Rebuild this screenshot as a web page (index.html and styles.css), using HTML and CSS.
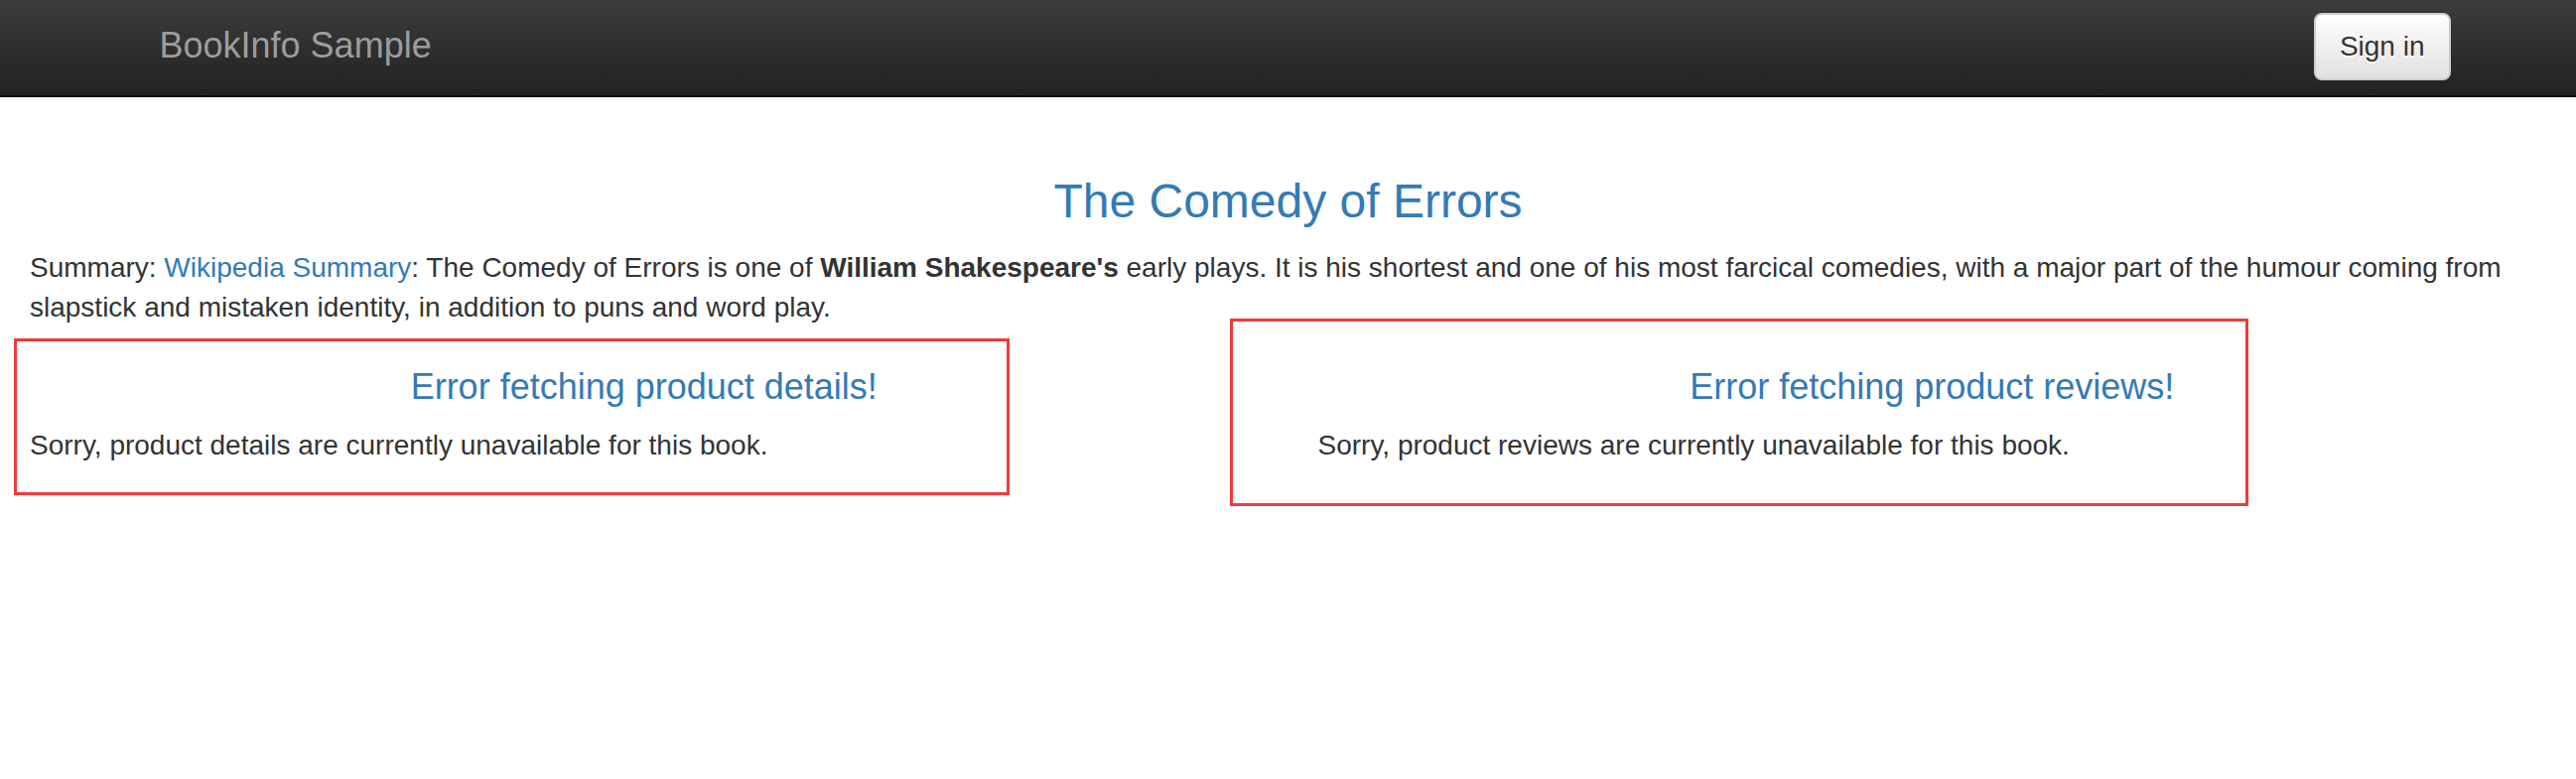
FILE: index.html
```html
<!DOCTYPE html>
<html lang="en">
<head>
<meta charset="utf-8">
<title>Simple Bookstore App</title>
<link rel="stylesheet" href="styles.css">
</head>
<body>
<nav class="navbar">
  <div class="nav-container">
    <a class="brand" href="#">BookInfo Sample</a>
    <button type="button" class="btn-signin">Sign in</button>
  </div>
</nav>
<main class="content">
  <h3 class="title">The Comedy of Errors</h3>
  <p class="summary">Summary: <a class="link" href="#">Wikipedia Summary</a>: The Comedy of Errors is one of <b>William Shakespeare's</b> early plays. It is his shortest and one of his most farcical comedies, with a major part of the humour coming from slapstick and mistaken identity, in addition to puns and word play.</p>
  <div class="row">
    <div class="col">
      <h4 class="subtitle">Error fetching product details!</h4>
      <p class="msg">Sorry, product details are currently unavailable for this book.</p>
    </div>
    <div class="col">
      <h4 class="subtitle">Error fetching product reviews!</h4>
      <p class="msg">Sorry, product reviews are currently unavailable for this book.</p>
    </div>
  </div>
</main>
<div class="mark mark-details"></div>
<div class="mark mark-reviews"></div>
</body>
</html>
```

FILE: styles.css
```css
* { box-sizing: border-box; }
html, body {
  margin: 0;
  padding: 0;
  background: #fff;
}
body {
  position: relative;
  font-family: "Liberation Sans", Arial, Helvetica, sans-serif;
  font-size: 28px;
  line-height: 40px;
  color: #333;
  width: 2595px;
  height: 785px;
  overflow: hidden;
}
.navbar {
  height: 98px;
  background-image: linear-gradient(to bottom, #3c3c3c 0, #222 100%);
  border-bottom: 2px solid #080808;
  margin-bottom: 39px;
}
.nav-container {
  width: 2340px;
  margin: 0 auto;
  padding: 0 30px;
  display: flex;
  justify-content: space-between;
  align-items: flex-start;
  height: 96px;
}
.brand {
  margin-left: -27px;
  padding: 26px 30px 30px;
  font-size: 36px;
  line-height: 40px;
  color: #9d9d9d;
  text-decoration: none;
}
.btn-signin {
  margin-top: 13px;
  margin-right: -31px;
  height: 68px;
  padding: 12px 24px;
  font-family: "Liberation Sans", Arial, Helvetica, sans-serif;
  font-size: 28px;
  line-height: 40px;
  color: #333;
  background-image: linear-gradient(to bottom, #fff 0, #e0e0e0 100%);
  border: 2px solid #ccc;
  border-radius: 8px;
  box-shadow: inset 0 2px 0 rgba(255,255,255,.15), 0 2px 2px rgba(0,0,0,.075);
  text-shadow: 0 2px 0 #fff;
}
.content {
  display: flow-root;
  padding: 0 30px;
}
.title {
  margin: 40px 0 20px;
  font-size: 48px;
  line-height: 52.8px;
  font-weight: 500;
  text-align: center;
  color: #337ab7;
}
.summary {
  margin: 0 0 20px;
}
.link {
  color: #337ab7;
  text-decoration: none;
}
.summary b { font-weight: 700; }
.row {
  display: flex;
  margin: 0 -30px;
}
.col {
  flex: 1 1 0;
  padding: 0 30px;
}
.subtitle {
  margin: 20px 0 20px;
  font-size: 36px;
  line-height: 39.6px;
  font-weight: 500;
  text-align: center;
  color: #337ab7;
}
.msg {
  margin: 0 0 20px;
}
.mark {
  position: absolute;
  border: 3px solid #f23a3a;
  pointer-events: none;
}
.mark-details {
  left: 14px;
  top: 341px;
  width: 1003px;
  height: 158px;
}
.mark-reviews {
  left: 1239px;
  top: 321px;
  width: 1026px;
  height: 189px;
}
```
